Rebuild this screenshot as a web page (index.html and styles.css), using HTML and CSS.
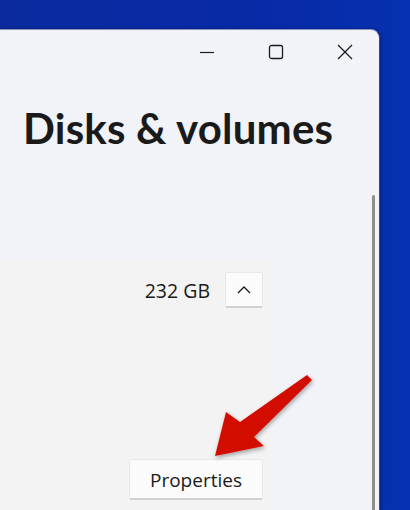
FILE: index.html
```html
<!DOCTYPE html>
<html>
<head>
<meta charset="utf-8">
<link rel="stylesheet" href="styles.css">
</head>
<body>
<div class="window">
  <div class="titlebar">
    <div class="cap-btn">
      <svg width="16" height="16" viewBox="0 0 16 16"><path d="M1 8.5H15" stroke="#1b1b1b" stroke-width="1.2"/></svg>
    </div>
    <div class="cap-btn">
      <svg width="16" height="16" viewBox="0 0 16 16"><rect x="1.5" y="1.5" width="13" height="13" rx="2" fill="none" stroke="#1b1b1b" stroke-width="1.3"/></svg>
    </div>
    <div class="cap-btn">
      <svg width="16" height="16" viewBox="0 0 16 16"><path d="M1 1L15 15M15 1L1 15" stroke="#1b1b1b" stroke-width="1.3"/></svg>
    </div>
  </div>
  <h1 class="title">Disks &amp; volumes</h1>
  <div class="body">
    <div class="content">
      <div class="panel">
        <div class="disk-row">
          <span class="size">232 GB</span>
          <button class="chev-btn">
            <svg width="16" height="10" viewBox="0 0 16 10"><path d="M2 8L8 2L14 8" fill="none" stroke="#1b1b1b" stroke-width="1.3"/></svg>
          </button>
        </div>
        <div class="actions">
          <button class="prop-btn">Properties</button>
        </div>
      </div>
    </div>
    <div class="scrollbar"></div>
  </div>
</div>
<svg class="arrow" width="410" height="510" viewBox="0 0 410 510">
  <defs>
    <filter id="sh" x="-20%" y="-20%" width="140%" height="140%">
      <feDropShadow dx="1" dy="2" stdDeviation="2" flood-color="#000" flood-opacity="0.35"/>
    </filter>
  </defs>
  <polygon points="307,375 312,380 254,437 264,446 215,456 226,412 240,422" fill="#d20f00" filter="url(#sh)"/>
</svg>
</body>
</html>
```
FILE: styles.css
```css
html, body {
  margin: 0;
  padding: 0;
  height: 100%;
  overflow: hidden;
}
body {
  background: linear-gradient(90deg, #0a2a9e 0%, #0829a6 60%, #0631b0 100%);
  font-family: "Open Sans", "Noto Sans", sans-serif;
  color: #1b1b1b;
  position: relative;
}
.window {
  margin-top: 29px;
  width: 380px;
  height: 481px;
  box-sizing: border-box;
  background: #f1f3f9;
  border-top: 1px solid #8a93b8;
  border-right: 1px solid #3c4a8c;
  border-top-right-radius: 9px;
  display: flex;
  flex-direction: column;
  box-shadow: 1px 0 3px rgba(0,0,30,0.35);
}
.titlebar {
  display: flex;
  justify-content: flex-end;
  height: 44px;
  flex: none;
}
.cap-btn {
  width: 69px;
  display: flex;
  align-items: center;
  justify-content: center;
}
.title {
  margin: 0;
  padding-left: 23px;
  padding-top: 26px;
  font-family: "Lato", sans-serif;
  font-weight: 700;
  font-size: 42px;
  line-height: 56px;
  color: #1a1a1a;
  letter-spacing: 0.2px;
  flex: none;
}
.body {
  flex: 1;
  display: flex;
  min-height: 0;
}
.content {
  width: 273px;
  padding-top: 104px;
  display: flex;
  flex-direction: column;
}
.panel {
  flex: 1;
  background: #f3f3f3;
  display: flex;
  flex-direction: column;
  padding: 12px 10px 0 0;
}
.disk-row {
  display: flex;
  justify-content: flex-end;
  align-items: center;
  gap: 15px;
}
.size {
  font-size: 19.5px;
  color: #1a1a1a;
}
.chev-btn {
  width: 38px;
  height: 36px;
  box-sizing: border-box;
  background: #fbfbfb;
  border: 1px solid #e8e8e8;
  border-bottom: 2px solid #d0d0d0;
  border-radius: 2px;
  padding: 0;
  display: flex;
  align-items: center;
  justify-content: center;
}
.actions {
  display: flex;
  justify-content: flex-end;
  margin-top: 151px;
}
.prop-btn {
  width: 134px;
  height: 41px;
  box-sizing: border-box;
  background: #fbfbfb;
  border: 1px solid #e8e8e8;
  border-bottom: 2px solid #d0d0d0;
  border-radius: 2px;
  font-family: "Open Sans", "Noto Sans", sans-serif;
  font-size: 19px;
  color: #1a1a1a;
  padding: 2px 0 0 0;
}
.scrollbar {
  margin-left: 99px;
  margin-top: 39px;
  width: 3px;
  background: #8e8e8e;
  border-radius: 1.5px 1.5px 0 0;
}
.arrow {
  position: absolute;
  left: 0;
  top: 0;
  pointer-events: none;
}
```
